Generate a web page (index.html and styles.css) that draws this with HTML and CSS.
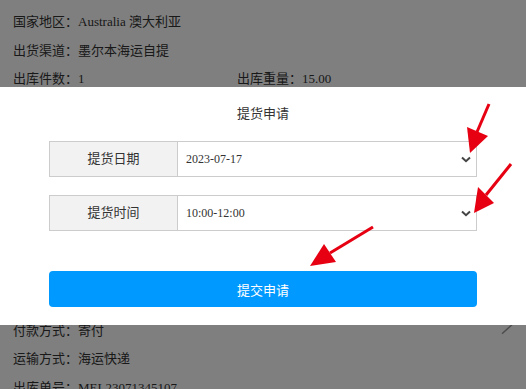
FILE: index.html
```html
<!DOCTYPE html>
<html lang="zh">
<head>
  <meta charset="UTF-8" />
  <title>出库详情</title>
  <link rel="stylesheet" href="styles.css">
</head>
<body>
  <main class="detail">
    <section class="group">
      <div class="row">国家地区：Australia 澳大利亚</div>
      <div class="row">出货渠道：墨尔本海运自提</div>
      <div class="row cols">
        <span>出库件数：1</span>
        <span>出库重量：15.00</span>
      </div>
    </section>

    <section class="group">
      <div class="row split">
        <span>付款方式：寄付</span>
        <svg class="edit" width="16" height="16" viewBox="0 0 16 16">
          <path d="M5 10.75 L15 1.75" />
        </svg>
      </div>
      <div class="row">运输方式：海运快递</div>
      <div class="row">出库单号：MEL23071345107</div>
    </section>
  </main>

  <div class="mask"></div>

  <div class="dialog">
    <div class="dialog-title">提货申请</div>

    <div class="field">
      <div class="field-label">提货日期</div>
      <div class="field-value">
        <span>2023-07-17</span>
        <svg class="chevron" width="10" height="7" viewBox="0 0 10 7">
          <path d="M1 1.5 L5 5.2 L9 1.5" />
        </svg>
      </div>
    </div>

    <div class="field">
      <div class="field-label">提货时间</div>
      <div class="field-value">
        <span>10:00-12:00</span>
        <svg class="chevron" width="10" height="7" viewBox="0 0 10 7">
          <path d="M1 1.5 L5 5.2 L9 1.5" />
        </svg>
      </div>
    </div>

    <button class="submit">提交申请</button>
  </div>

  <!-- 标注箭头 -->
  <svg class="marks" width="526" height="389" viewBox="0 0 526 389">
    <line x1="489" y1="104" x2="477" y2="132" />
    <polygon points="467,127 488,136 470,153" />
    <line x1="511" y1="164" x2="486" y2="195" />
    <polygon points="478,187 494,203 474,213" />
    <line x1="373" y1="227" x2="330" y2="253" />
    <polygon points="324,244 336,262 310,266" />
  </svg>
</body>
</html>
```

FILE: styles.css
```css
html, body {
  margin: 0;
  padding: 0;
  background: #fff;
  color: #333;
  font-family: "Liberation Serif", "Noto Sans CJK SC", serif;
  font-size: 13px;
}

.detail {
  padding: 8px 13px 0;
}

/* 中间的内容被弹窗挡住 */
.group + .group {
  margin-top: 223px;
}

.row {
  height: 28.5px;
  line-height: 28.5px;
}

.cols {
  display: grid;
  grid-template-columns: 224px 1fr;
}

.split {
  display: flex;
  justify-content: space-between;
  align-items: center;
}

.edit path {
  fill: none;
  stroke: #999;
  stroke-width: 1.5;
}

.mask {
  position: fixed;
  top: 0; left: 0;
  width: 100%;
  height: 100%;
  background: rgba(0, 0, 0, 0.5);
}

.dialog {
  position: fixed;
  top: 87px;
  left: 0;
  right: 0;
  height: 238px;
  box-sizing: border-box;
  background: #fff;
  padding: 17px 49px 18px;
}

.dialog-title {
  text-align: center;
  line-height: 20px;
  margin-bottom: 17px;
}

.field {
  display: flex;
  height: 36px;
  box-sizing: border-box;
  border: 1px solid #ccc;
  margin-bottom: 18px;
}

.field-label {
  width: 127px;
  flex: none;
  background: #f2f2f2;
  border-right: 1px solid #ccc;
  text-align: center;
  line-height: 34px;
}

.field-value {
  flex: 1;
  display: flex;
  align-items: center;
  justify-content: space-between;
  padding: 0 5px 0 8px;
  font-size: 12px;
}

.chevron path {
  fill: none;
  stroke: #444;
  stroke-width: 2;
}

.submit {
  display: block;
  width: 100%;
  height: 36px;
  margin-top: 40px;
  border: none;
  border-radius: 4px;
  background: #0099ff;
  color: #fff;
  font-family: "Liberation Serif", "Noto Sans CJK SC", serif;
  font-size: 13px;
  cursor: pointer;
}

.marks {
  position: fixed;
  top: 0; left: 0;
  pointer-events: none;
}

.marks line {
  stroke: #e60012;
  stroke-width: 3;
}

.marks polygon {
  fill: #e60012;
}
```
